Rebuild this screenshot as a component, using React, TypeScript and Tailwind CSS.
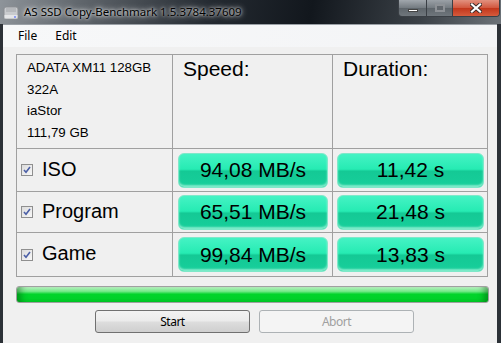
import React from 'react'

const rows = [
  { name: 'ISO', speed: '94,08 MB/s', time: '11,42 s', h: 'h-[42px]' },
  { name: 'Program', speed: '65,51 MB/s', time: '21,48 s', h: 'h-[40px]' },
  { name: 'Game', speed: '99,84 MB/s', time: '13,83 s', h: 'h-[43px]' },
]

function Check() {
  return (
    <div className="w-[12px] h-[12px] border border-[#8f8f8f] bg-[linear-gradient(135deg,#dcdcdc,#f8f8f8)] flex items-center justify-center">
      <svg width="8" height="8" viewBox="0 0 8 8">
        <path d="M1 4l2 2.3L7 1" fill="none" stroke="#4b5fa6" strokeWidth="1.6" />
      </svg>
    </div>
  )
}

function Pill({ text }: { text: string }) {
  return (
    <div className="h-[35px] w-full rounded-[6px] border border-[#7fe8c9] bg-[linear-gradient(to_bottom,#45f3c4_0%,#26ebb3_46%,#14c995_52%,#17cf9b_100%)] shadow-[inset_0_-2px_2px_rgba(200,255,235,0.6)] flex items-center justify-center text-[21px] text-black font-['Liberation_Sans',Arial,sans-serif]">
      {text}
    </div>
  )
}

function DriveIcon() {
  return (
    <svg width="16" height="14" viewBox="0 0 16 14">
      <rect x="1" y="1" width="14" height="12" rx="2" fill="#c9cbce" stroke="#8a8d91" />
      <path d="M4 2v4M6 2v4M8 2v4M10 2v4M12 2v4" stroke="#9a9da1" strokeWidth="0.8" />
      <rect x="1.5" y="9" width="13" height="3.5" fill="#e4e5e7" />
      <rect x="11" y="10.5" width="2" height="1" fill="#3a57ff" />
    </svg>
  )
}

export default function App() {
  return (
    <div className="w-[501px] h-[343px] overflow-hidden flex flex-col bg-[#2c3137] font-['Liberation_Sans',Arial,sans-serif]">
      {/* title bar */}
      <div className="h-[24px] shrink-0 relative flex items-center bg-[linear-gradient(100deg,#8e949a_0%,#60666c_16%,#242a31_42%,#12171d_62%,#3b4147_84%,#6c7278_100%)]">
        <div className="ml-[3px] mt-[1px]">
          <DriveIcon />
        </div>
        <span className="ml-[5px] text-[11.5px] text-black font-['Noto_Sans',sans-serif] [text-shadow:0_0_6px_rgba(255,255,255,0.95),0_0_3px_rgba(255,255,255,0.9)]">
          AS SSD Copy-Benchmark 1.5.3784.37609
        </span>
        <div className="absolute top-0 right-[1px] h-[17px] flex rounded-b-[4px] border border-t-0 border-[#3a3f45] overflow-hidden">
          <div className="w-[28px] h-full bg-[linear-gradient(to_bottom,#a1a7ad,#737a80_50%,#5e656b_51%,#6f767c)] border-r border-[#3a3f45] flex items-center justify-center">
            <div className="w-[10px] h-[3px] bg-white mt-[5px] border border-[#444]" />
          </div>
          <div className="w-[26px] h-full bg-[linear-gradient(to_bottom,#9ba1a7,#737a80_50%,#5e656b_51%,#6f767c)] border-r border-[#3a3f45] flex items-center justify-center">
            <div className="w-[10px] h-[8px] border-[2px] border-[#8d9196] bg-[#62686e]" />
          </div>
          <div className="w-[46px] h-full bg-[linear-gradient(to_bottom,#e2917f,#d1563d_50%,#c2361b_51%,#d55a3c)] flex items-center justify-center">
            <svg width="12" height="10" viewBox="0 0 12 10">
              <path d="M2 1.5l8 7M10 1.5l-8 7" stroke="#3a2a28" strokeWidth="4" strokeLinecap="square" />
              <path d="M2 1.5l8 7M10 1.5l-8 7" stroke="#ffffff" strokeWidth="2.2" strokeLinecap="square" />
            </svg>
          </div>
        </div>
      </div>

      {/* client */}
      <div className="flex-1 ml-[3px] mr-[4px] border-t border-[#9aa0a6] bg-[#f0f0f0] flex flex-col">
        <div className="h-[22px] shrink-0 flex items-center gap-[18px] pl-[15px] text-[12px] text-black font-['Noto_Sans',sans-serif] bg-[linear-gradient(to_right,#f7f8f9,#f3f4f6)]">
          <span>File</span>
          <span>Edit</span>
        </div>

        <div className="ml-[13px] mt-[7px] w-[472px] grid grid-cols-[155px_159px_154px] gap-px bg-[#a0a0a0] p-px">
          <div className="h-[93px] bg-[#f0f0f0] pl-[10px] pt-[2px] text-[13.3px] leading-[21.7px] text-black">
            <div>ADATA XM11 128GB</div>
            <div>322A</div>
            <div>iaStor</div>
            <div>111,79 GB</div>
          </div>
          <div className="h-[93px] bg-[#f0f0f0] pl-[10px] pt-[2px] text-[21px] leading-[24px] text-black">Speed:</div>
          <div className="h-[93px] bg-[#f0f0f0] pl-[10px] pt-[2px] text-[21px] leading-[24px] text-black">Duration:</div>
          {rows.map((r) => (
            <React.Fragment key={r.name}>
              <div className={`${r.h} bg-[#f0f0f0] flex items-center pl-[4px] gap-[9px] text-[20px] text-black`}>
                <Check />
                <span className="-mt-[3px]">{r.name}</span>
              </div>
              <div className={`${r.h} bg-[#f0f0f0] flex items-center pl-[5px] pr-[4px]`}>
                <Pill text={r.speed} />
              </div>
              <div className={`${r.h} bg-[#f0f0f0] flex items-center pl-[4px] pr-[3px]`}>
                <Pill text={r.time} />
              </div>
            </React.Fragment>
          ))}
        </div>

        <div className="ml-[13px] mt-[9px] w-[473px] h-[17px] rounded-[3px] border border-[#a0a0a0] bg-[linear-gradient(to_bottom,#c4f9cb_0%,#6fe884_30%,#02d42b_48%,#00cf28_100%)] shadow-[inset_8px_0_6px_-4px_rgba(0,80,10,0.45),inset_-8px_0_6px_-4px_rgba(0,80,10,0.45)]" />

        <div className="mt-[7px] ml-[92px] flex gap-[9px] text-[12px]">
          <div className="w-[155px] h-[23px] rounded-[3px] border border-[#707070] bg-[linear-gradient(to_bottom,#f2f2f2,#ebebeb_48%,#dddddd_52%,#cfcfcf)] flex items-center justify-center text-black font-['Noto_Sans',sans-serif] tracking-[-0.5px]">
            Start
          </div>
          <div className="w-[155px] h-[23px] rounded-[3px] border border-[#adb2b5] bg-[#f4f4f4] flex items-center justify-center text-[#a0a0a0] font-['Noto_Sans',sans-serif] tracking-[-0.5px]">
            Abort
          </div>
        </div>
      </div>
    </div>
  )
}
